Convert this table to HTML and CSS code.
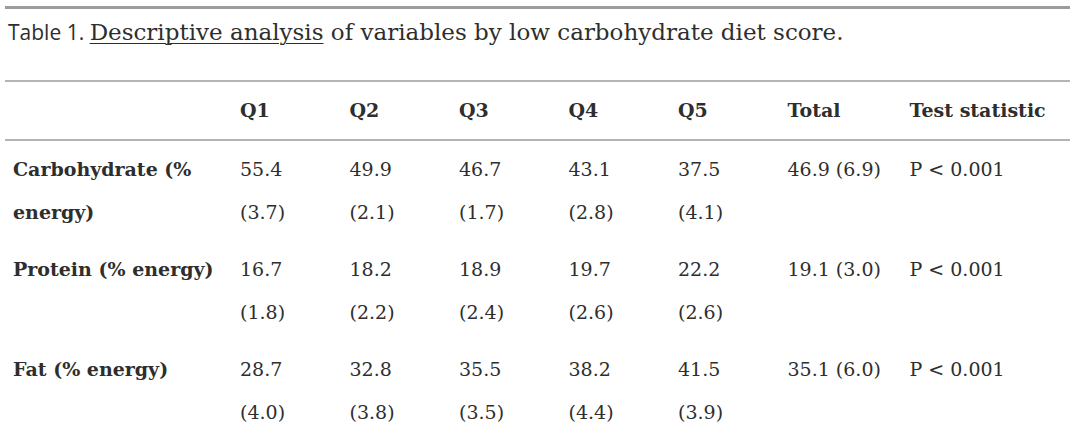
FILE: index.html
```html
<!DOCTYPE html>
<html lang="en">
<head>
<meta charset="utf-8">
<title>Table 1</title>
<link rel="stylesheet" href="styles.css">
</head>
<body>
<div class="wrap">
  <div class="caption-block">
    <p class="caption"><span class="label">Table 1. </span><span class="link">Descriptive analysis</span> of variables by low carbohydrate diet score.</p>
  </div>
  <table class="data">
    <colgroup>
      <col class="c-label">
      <col class="c-q">
      <col class="c-q">
      <col class="c-q">
      <col class="c-q">
      <col class="c-q">
      <col class="c-total">
      <col class="c-test">
    </colgroup>
    <thead>
      <tr>
        <th></th>
        <th>Q1</th>
        <th>Q2</th>
        <th>Q3</th>
        <th>Q4</th>
        <th>Q5</th>
        <th>Total</th>
        <th>Test statistic</th>
      </tr>
    </thead>
    <tbody>
      <tr>
        <th>Carbohydrate (% energy)</th>
        <td>55.4<br>(3.7)</td>
        <td>49.9<br>(2.1)</td>
        <td>46.7<br>(1.7)</td>
        <td>43.1<br>(2.8)</td>
        <td>37.5<br>(4.1)</td>
        <td>46.9 (6.9)</td>
        <td>P &lt; 0.001</td>
      </tr>
      <tr>
        <th>Protein (% energy)</th>
        <td>16.7<br>(1.8)</td>
        <td>18.2<br>(2.2)</td>
        <td>18.9<br>(2.4)</td>
        <td>19.7<br>(2.6)</td>
        <td>22.2<br>(2.6)</td>
        <td>19.1 (3.0)</td>
        <td>P &lt; 0.001</td>
      </tr>
      <tr>
        <th>Fat (% energy)</th>
        <td>28.7<br>(4.0)</td>
        <td>32.8<br>(3.8)</td>
        <td>35.5<br>(3.5)</td>
        <td>38.2<br>(4.4)</td>
        <td>41.5<br>(3.9)</td>
        <td>35.1 (6.0)</td>
        <td>P &lt; 0.001</td>
      </tr>
    </tbody>
  </table>
</div>
</body>
</html>
```
FILE: styles.css
```css
html, body {
  margin: 0;
  padding: 0;
  background: #ffffff;
}

.wrap {
  padding: 6px 10px 0 5px;
  color: #2e2e2e;
}

.caption-block {
  border-top: 3px solid #9c9c9c;
  border-bottom: 2px solid #b4b4b4;
  height: 71px;
  box-sizing: content-box;
}

.caption {
  margin: 0;
  padding: 8px 0 0 3px;
  font-family: "DejaVu Serif", serif;
  font-size: 23px;
  line-height: 30px;
  color: #2e2e2e;
}

.label {
  font-family: "Open Sans", "Noto Sans", sans-serif;
  font-size: 21px;
}

.link {
  text-decoration: underline;
  text-decoration-thickness: 1px;
  text-underline-offset: 3px;
}

.data {
  width: 1065px;
  table-layout: fixed;
  border-collapse: collapse;
  font-family: "DejaVu Serif", serif;
  font-size: 19px;
  line-height: 43px;
  color: #2e2e2e;
}

.c-label { width: 227px; }
.c-q { width: 109.5px; }
.c-total { width: 122px; }
.c-test { width: auto; }

.data th,
.data td {
  text-align: left;
  vertical-align: top;
  padding: 7px 8px;
}

.data th {
  font-weight: bold;
}

.data thead tr {
  border-bottom: 2px solid #b4b4b4;
}
```
